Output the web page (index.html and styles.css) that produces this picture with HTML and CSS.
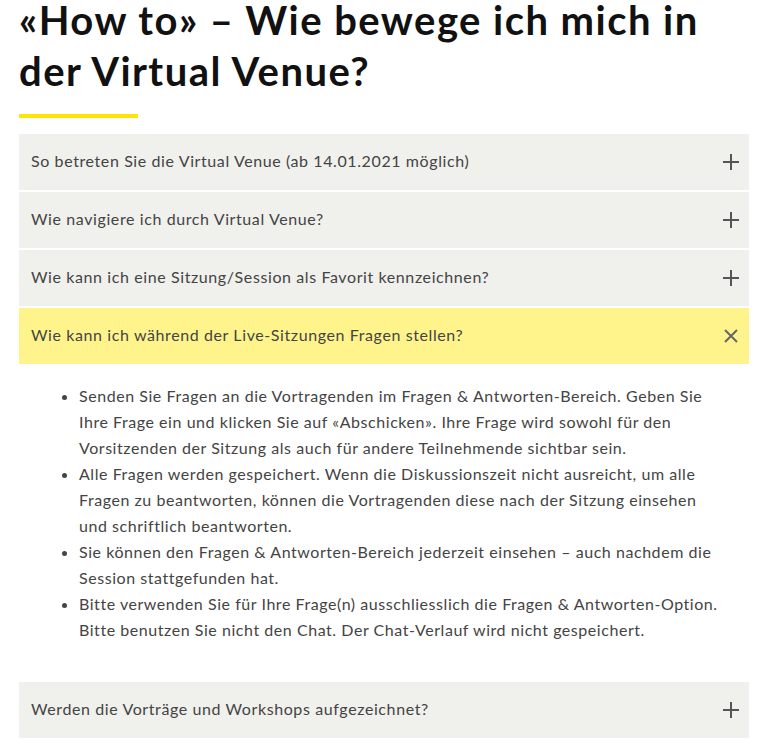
FILE: index.html
```html
<!DOCTYPE html>
<html lang="de">
<head>
<meta charset="utf-8">
<link rel="stylesheet" href="styles.css">
</head>
<body>
<main class="page">
  <h1 class="title">«How to» – Wie bewege ich mich in der Virtual Venue?</h1>
  <div class="rule"></div>
  <div class="accordion">
    <div class="item">
      <span class="item-title">So betreten Sie die Virtual Venue (ab 14.01.2021 möglich)</span>
      <svg class="icon" viewBox="0 0 16 16" width="16" height="16"><path d="M8 0v16M0 8h16" stroke="#555" stroke-width="2" fill="none"/></svg>
    </div>
    <div class="item">
      <span class="item-title">Wie navigiere ich durch Virtual Venue?</span>
      <svg class="icon" viewBox="0 0 16 16" width="16" height="16"><path d="M8 0v16M0 8h16" stroke="#555" stroke-width="2" fill="none"/></svg>
    </div>
    <div class="item">
      <span class="item-title">Wie kann ich eine Sitzung/Session als Favorit kennzeichnen?</span>
      <svg class="icon" viewBox="0 0 16 16" width="16" height="16"><path d="M8 0v16M0 8h16" stroke="#555" stroke-width="2" fill="none"/></svg>
    </div>
    <div class="item open">
      <span class="item-title">Wie kann ich während der Live-Sitzungen Fragen stellen?</span>
      <svg class="icon" viewBox="0 0 16 16" width="16" height="16"><path d="M2 2l12 12M14 2L2 14" stroke="#666" stroke-width="2" fill="none"/></svg>
    </div>
    <div class="panel">
      <ul class="answers">
        <li>Senden Sie Fragen an die Vortragenden im Fragen &amp; Antworten-Bereich. Geben Sie Ihre Frage ein und klicken Sie auf «Abschicken». Ihre Frage wird sowohl für den Vorsitzenden der Sitzung als auch für andere Teilnehmende sichtbar sein.</li>
        <li>Alle Fragen werden gespeichert. Wenn die Diskussionszeit nicht ausreicht, um alle Fragen zu beantworten, können die Vortragenden diese nach der Sitzung einsehen und schriftlich beantworten.</li>
        <li>Sie können den Fragen &amp; Antworten-Bereich jederzeit einsehen – auch nachdem die Session stattgefunden hat.</li>
        <li>Bitte verwenden Sie für Ihre Frage(n) ausschliesslich die Fragen &amp; Antworten-Option. Bitte benutzen Sie nicht den Chat. Der Chat-Verlauf wird nicht gespeichert.</li>
      </ul>
    </div>
    <div class="item">
      <span class="item-title">Werden die Vorträge und Workshops aufgezeichnet?</span>
      <svg class="icon" viewBox="0 0 16 16" width="16" height="16"><path d="M8 0v16M0 8h16" stroke="#555" stroke-width="2" fill="none"/></svg>
    </div>
  </div>
</main>
</body>
</html>
```

FILE: styles.css
```css
* { box-sizing: border-box; }
html, body { margin: 0; padding: 0; background: #fff; }
body { font-family: "Lato", "Liberation Sans", sans-serif; color: #444; }
.page { padding: 0 18px 0 19px; }
.title {
  margin: -5px 0 0 0;
  font-family: "Lato", "Liberation Sans", sans-serif;
  font-weight: 700;
  font-size: 40px;
  line-height: 51px;
  color: #111;
  letter-spacing: 1.45px;
}
.rule { width: 119px; height: 4px; background: #ffe600; margin-top: 17px; }
.accordion { margin-top: 16px; display: flex; flex-direction: column; gap: 2px; }
.item {
  height: 56px;
  display: flex;
  align-items: center;
  justify-content: space-between;
  padding: 0 10px 3px 12px;
  background: #f0f0ec;
  font-size: 16px;
  color: #444;
  letter-spacing: 0.6px;
}
.item .icon { margin-top: 3px; }
.item.open { background: #fff48c; }
.item-title { font-weight: 400; }
.icon { flex: none; }
.panel { padding: 17px 28px 37px 0; }
.answers {
  margin: 0;
  padding-left: 60px;
  font-size: 16px;
  line-height: 26px;
  color: #444;
  letter-spacing: 0.55px;
}
```
